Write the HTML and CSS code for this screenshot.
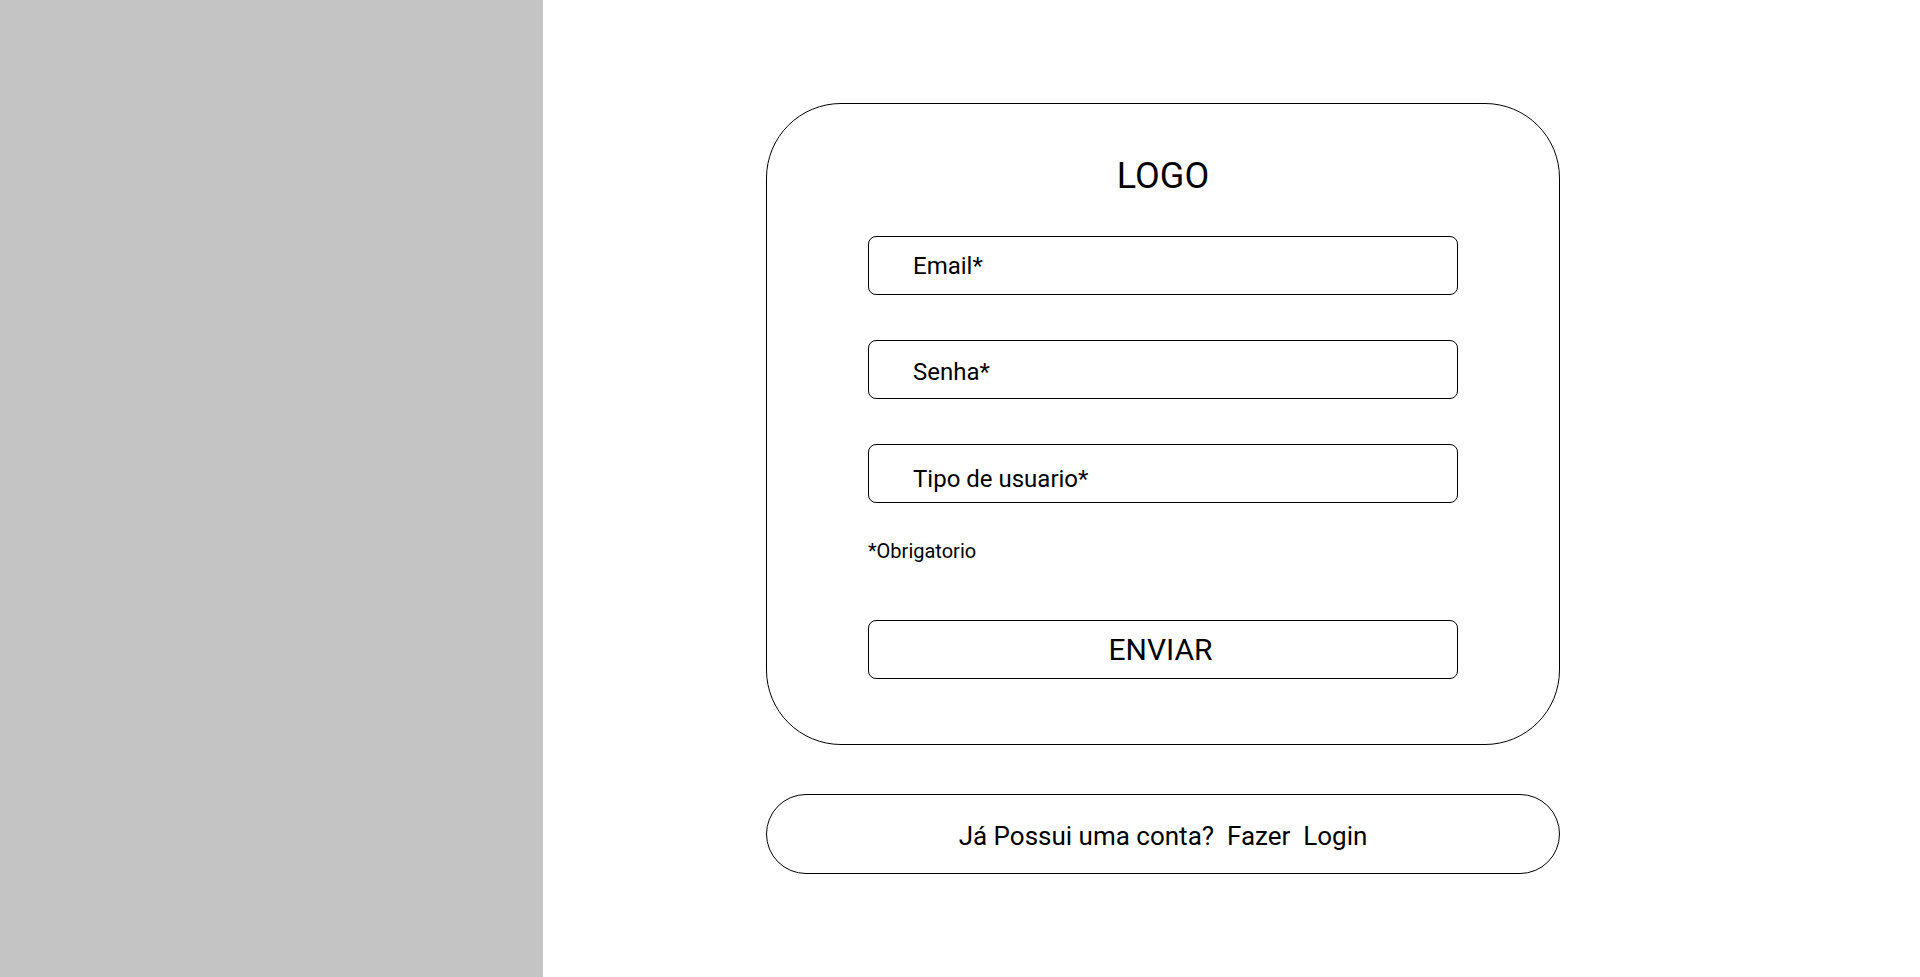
FILE: index.html
```html
<!DOCTYPE html>
<html lang="pt-BR">
<head>
  <meta charset="UTF-8">
  <meta name="viewport" content="width=device-width, initial-scale=1.0">
  <title>Cadastro</title>
  <link rel="stylesheet" href="styles.css">
</head>
<body>
  <div class="page">
    <aside class="side"></aside>

    <main class="main">
      <form class="card">
        <h1 class="logo">LOGO</h1>

        <div class="fields">
          <div class="field">Email*</div>
          <div class="field field-mid">Senha*</div>
          <div class="field field-low">Tipo de usuario*</div>
        </div>

        <p class="note">*Obrigatorio</p>

        <button class="btn" type="button">ENVIAR</button>
      </form>

      <div class="switch">Já Possui uma conta?  Fazer  Login</div>
    </main>
  </div>
</body>
</html>
```

FILE: styles.css
```css
* {
  box-sizing: border-box;
}
body {
  margin: 0;
  font-family: Roboto, "Liberation Sans", sans-serif;
  color: #000;
  background: #fff;
}
.page {
  display: flex;
  height: 977px;
}
.side {
  width: 543px;
  flex-shrink: 0;
  background: #c4c4c4;
}
.main {
  flex: 1;
  display: flex;
  flex-direction: column;
  padding: 103px 0 0 223px;
}
.card {
  width: 794px;
  height: 642px;
  border: 1px solid #000;
  border-radius: 75px;
  padding: 52px 101px 0 101px;
  display: flex;
  flex-direction: column;
}
.logo {
  margin: 0;
  font-size: 36px;
  font-weight: 400;
  line-height: 40px;
  text-align: center;
}
.fields {
  display: flex;
  flex-direction: column;
  gap: 45px;
  margin-top: 40px;
}
.field {
  height: 59px;
  border: 1px solid #000;
  border-radius: 8px;
  display: flex;
  align-items: center;
  padding-left: 44px;
  font-size: 24px;
}
/* labels sit a little lower in the lower boxes */
.field-mid {
  padding-top: 5px;
}
.field-low {
  padding-top: 11px;
}
.note {
  margin: 37px 0 0;
  font-size: 20px;
  line-height: 23px;
}
.btn {
  margin-top: 57px;
  height: 59px;
  border: 1px solid #000;
  border-radius: 8px;
  background: #fff;
  padding: 0 5px 0 0;
  font-family: inherit;
  font-size: 30px;
  color: #000;
  cursor: pointer;
}
.switch {
  width: 794px;
  height: 80px;
  margin-top: 49px;
  border: 1px solid #000;
  border-radius: 40px;
  display: flex;
  align-items: center;
  justify-content: center;
  padding-top: 3px;
  font-size: 26px;
  white-space: pre;
}
```
